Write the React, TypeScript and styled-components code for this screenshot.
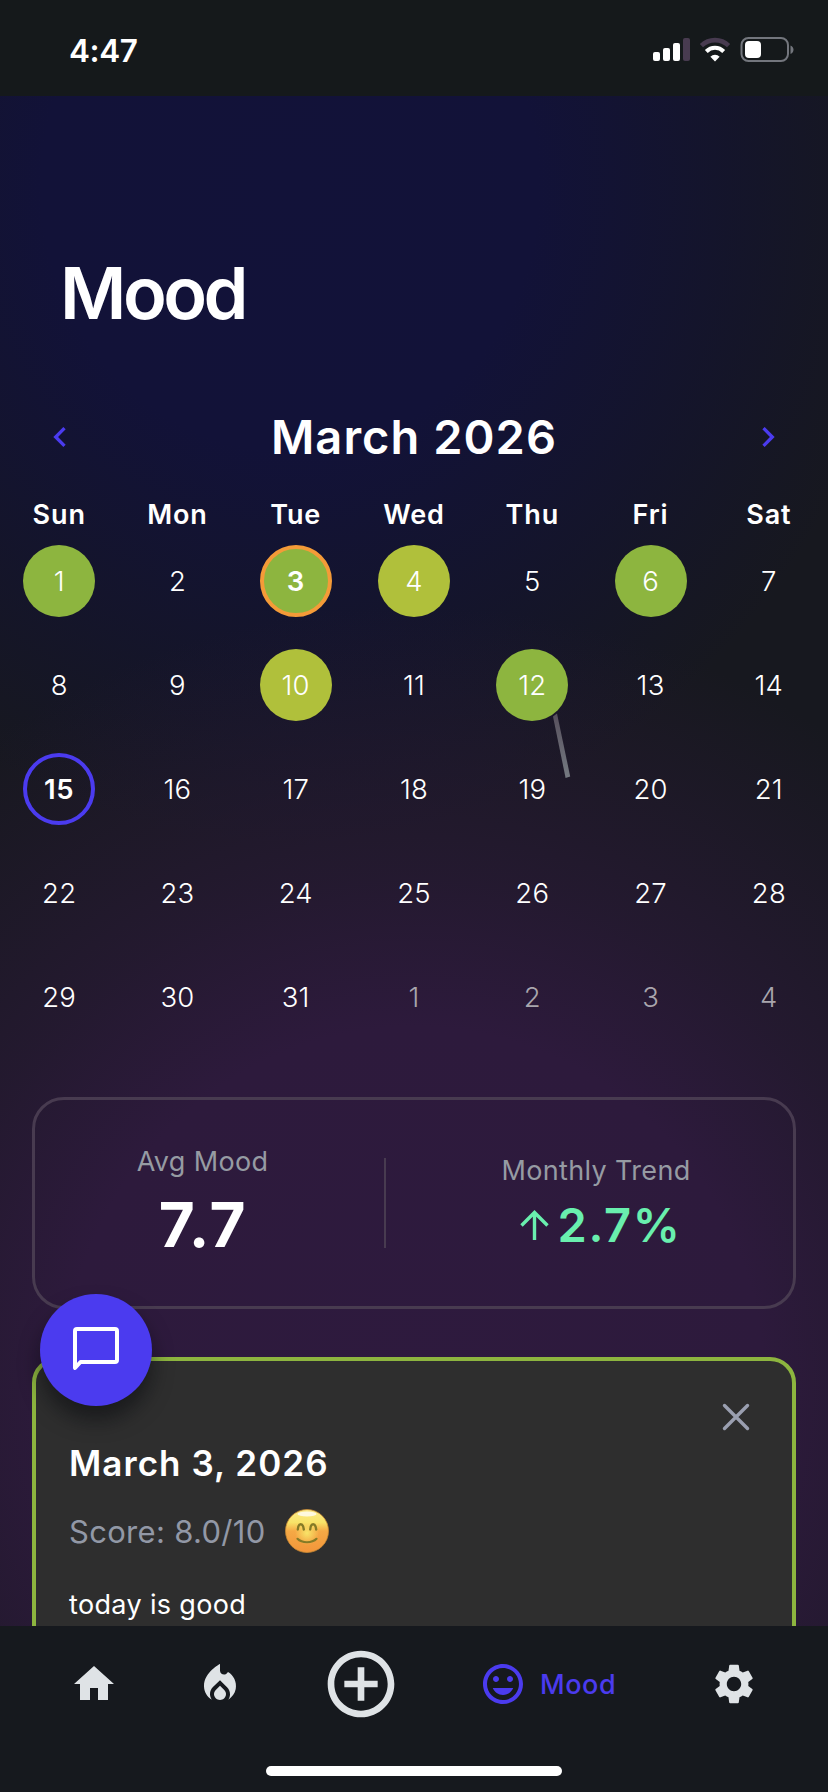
import React from 'react';
import styled, { createGlobalStyle } from 'styled-components';
import { MdHome, MdLocalFireDepartment, MdAddCircleOutline, MdMood, MdSettings, MdChevronLeft, MdChevronRight } from 'react-icons/md';

const Global = createGlobalStyle`
  * { box-sizing: border-box; }
  body { margin: 0; background: #16191e; font-family: Inter, "Liberation Sans", sans-serif; color: #fff; }
`;

const Screen = styled.div`
  width: 828px;
  height: 1792px;
  display: flex;
  flex-direction: column;
  overflow: hidden;
`;

const StatusBar = styled.header`
  height: 96px;
  flex: none;
  background: #15191b;
  display: flex;
  justify-content: space-between;
  align-items: center;
  padding: 5px 34px 0 69px;
`;

const Time = styled.span`
  font-size: 31.5px;
  line-height: 40px;
  font-weight: 600;
  letter-spacing: -0.4px;
`;

const StatusIcons = styled.svg`
  display: block;
  width: 142px;
  height: 28px;
`;

const Content = styled.main`
  position: relative;
  flex: 1;
  min-height: 0;
  overflow: hidden;
  display: flex;
  flex-direction: column;
  background:
    radial-gradient(ellipse 760px 780px at 50% 1290px, #2e1a3e 0%, #2d1a3c 46%, rgba(44, 26, 58, 0.6) 66%, rgba(40, 26, 52, 0) 100%),
    radial-gradient(ellipse 620px 660px at 290px 90px, #121239 0%, #121238 40%, rgba(18, 18, 52, 0.55) 72%, rgba(20, 22, 32, 0) 100%),
    #17181f;
`;

const Title = styled.h1`
  margin: 152px 0 0 60px;
  font-size: 72px;
  line-height: 90px;
  font-weight: 600;
  letter-spacing: -3.5px;
`;

const MonthBar = styled.div`
  display: flex;
  justify-content: space-between;
  align-items: center;
  height: 60px;
  margin-top: 69px;
  padding: 0 40px;
  color: #4b3bef;
`;

const MonthName = styled.h2`
  margin: 0;
  color: #fff;
  font-size: 47px;
  line-height: 60px;
  font-weight: 630;
  letter-spacing: 1.05px;
`;

const Week = styled.div<{ $header?: boolean }>`
  display: grid;
  grid-template-columns: repeat(7, 1fr);
  justify-items: center;
  align-items: center;
  height: ${p => (p.$header ? 34 : 72)}px;
  margin-top: ${p => (p.$header ? 30.5 : 32)}px;
  &:nth-of-type(3) { margin-top: 14px; }
`;

const WeekdayName = styled.span`
  font-size: 27px;
  font-weight: 630;
  letter-spacing: 0.9px;
`;

const Day = styled.span<{ $fill?: string; $ring?: string; $bold?: boolean; $muted?: boolean }>`
  width: 72px;
  height: 72px;
  border-radius: 50%;
  display: flex;
  align-items: center;
  justify-content: center;
  background: ${p => p.$fill ?? 'transparent'};
  border: ${p => (p.$ring ? `4px solid ${p.$ring}` : '0')};
  color: ${p => (p.$muted ? '#a9a6ad' : '#fff')};
  font-size: 27.5px;
  font-weight: ${p => (p.$bold ? 640 : 360)};
  letter-spacing: ${p => (p.$bold ? 0.6 : 0.2)}px;
`;

const Pointer = styled.svg`
  position: absolute;
  left: 548px;
  top: 614px;
  width: 24px;
  height: 70px;
`;

const Stats = styled.section`
  display: flex;
  align-items: center;
  height: 212px;
  flex: none;
  margin: 64.5px 32px 0;
  border: 3px solid #483b50;
  border-radius: 32px;
`;

const Stat = styled.div<{ $width: number }>`
  width: ${p => p.$width}px;
  display: flex;
  flex-direction: column;
  align-items: center;
  gap: 3px;
  padding-top: 5px;
`;

const StatLabel = styled.span`
  font-size: 27px;
  line-height: 36px;
  letter-spacing: 0.35px;
  font-weight: 380;
  color: #969ba3;
`;

const StatValue = styled.strong<{ $size: number }>`
  display: flex;
  align-items: center;
  font-size: ${p => p.$size}px;
  line-height: ${p => (p.$size > 50 ? 84 : 66)}px;
  font-weight: ${p => (p.$size > 50 ? 700 : 600)};
  letter-spacing: 1.6px;
  margin-left: ${p => (p.$size > 50 ? 1 : 9)}px;
  color: ${p => (p.$size > 50 ? '#fff' : '#69efae')};
`;

const Divider = styled.i`
  width: 2px;
  height: 90px;
  margin: 0 13px 0 14px;
  background: #483b50;
`;

const Detail = styled.section`
  position: relative;
  flex: none;
  height: 400px;
  margin: 48px 32px 0;
  padding: 0 34px 0 33px;
  border: 4px solid #8db53f;
  border-radius: 26px;
  background: #2e2e2e;
`;

const CloseRow = styled.div`
  display: flex;
  justify-content: flex-end;
  padding: 42px 8px 0 0;
  height: 78px;
`;

const DetailDate = styled.h3`
  margin: 0;
  font-size: 35px;
  line-height: 48px;
  font-weight: 630;
  letter-spacing: 1.05px;
`;

const Score = styled.div`
  display: flex;
  align-items: center;
  gap: 20px;
  height: 44px;
  margin-top: 22px;
  font-size: 31px;
  font-weight: 380;
  letter-spacing: 0.3px;
  color: #9298a6;
`;

const Note = styled.p`
  margin: 34px 0 0;
  font-size: 27px;
  line-height: 36px;
  letter-spacing: 0.35px;
`;

const ChatButton = styled.button`
  position: absolute;
  left: 40px;
  top: 1198px;
  width: 112px;
  height: 112px;
  padding: 0;
  border: 0;
  border-radius: 50%;
  background: #4b3bef;
  box-shadow: 0 14px 20px rgba(5, 8, 12, 0.5);
  display: flex;
  align-items: center;
  justify-content: center;
`;

const Nav = styled.nav`
  height: 166px;
  flex: none;
  background: #16191e;
  display: flex;
  flex-direction: column;
  align-items: center;
  justify-content: space-between;
  padding-bottom: 16px;
`;

const NavItems = styled.div`
  width: 100%;
  height: 116px;
  display: flex;
  align-items: center;
  justify-content: space-between;
  padding: 0 70px;
  color: #dfe3e6;
`;

const NavItem = styled.a<{ $active?: boolean }>`
  display: flex;
  align-items: center;
  gap: 13px;
  padding-right: ${p => (p.$active ? 16 : 0)}px;
  font-size: 27px;
  font-weight: 500;
  letter-spacing: 0.6px;
  color: ${p => (p.$active ? '#4b3bef' : 'inherit')};
`;

const HomeIndicator = styled.div`
  width: 296px;
  height: 10px;
  border-radius: 5px;
  background: #fff;
`;

const GREEN = '#8db53f';
const LIME = '#b0c03b';
const fills: Record<number, string> = { 1: GREEN, 3: GREEN, 4: LIME, 6: GREEN, 10: LIME, 12: GREEN };
const rings: Record<number, string> = { 3: '#f49b38', 15: '#4b3bef' };
const weekdays = ['Sun', 'Mon', 'Tue', 'Wed', 'Thu', 'Fri', 'Sat'];

const Status = () => (
  <StatusIcons viewBox="0 0 142 28">
    <g fill="#fff">
      <rect x="1" y="15" width="7" height="9" rx="2" />
      <rect x="11" y="11" width="7" height="13" rx="2" />
      <rect x="21" y="6" width="7" height="18" rx="2" />
      <rect x="31" y="1" width="7" height="23" rx="2" fill="#483b50" />
      <path d="M63 24.5l-4.6-4.8a6.6 6.6 0 0 1 9.2 0z" />
    </g>
    <path d="M54.3 14.5a12.2 12.2 0 0 1 17.4 0" fill="none" stroke="#fff" strokeWidth="4" />
    <path d="M49.4 8.6a19.6 19.6 0 0 1 27.2 0" fill="none" stroke="#483b50" strokeWidth="4.6" />
    <rect x="89.5" y="1" width="46.5" height="23" rx="7" fill="none" stroke="#73767d" strokeWidth="2" />
    <rect x="93" y="4" width="16" height="17" rx="4" fill="#fff" />
    <path d="M138.5 8.5c4 1.5 4 7 0 8.500z" fill="#73767d" />
  </StatusIcons>
);

const Emoji = () => (
  <svg width="44" height="44" viewBox="0 0 44 44">
    <defs>
      <linearGradient id="face" x1="0" y1="0" x2="0" y2="1">
        <stop offset="0" stopColor="#fbe98a" />
        <stop offset="0.3" stopColor="#f8e468" />
        <stop offset="0.5" stopColor="#f5a945" />
        <stop offset="1" stopColor="#f2953a" />
      </linearGradient>
      <radialGradient id="glow">
        <stop offset="0" stopColor="#f8e468" />
        <stop offset="1" stopColor="#f8e468" stopOpacity="0" />
      </radialGradient>
    </defs>
    <circle cx="22" cy="22" r="21.5" fill="url(#face)" stroke="#c98a34" strokeWidth="0.8" />
    <circle cx="22" cy="24" r="12" fill="url(#glow)" />
    <ellipse cx="22" cy="5" rx="9.500" ry="2.600" fill="#fff" opacity="0.75" />
    <g fill="none" stroke="#847a26" strokeLinecap="round">
      <path d="M12.800 20.500c.6-7 5.200-7 6 0M25.200 20.500c.6-7 5.200-7 6 0" strokeWidth="2.400" />
      <path d="M12.500 29.800c4.500 4.600 14.500 4.600 19 0" strokeWidth="2.200" />
    </g>
  </svg>
);

export default function App() {
  return (
    <Screen>
      <Global />
      <StatusBar>
        <Time>4:47</Time>
        <Status />
      </StatusBar>
      <Content>
        <Title>Mood</Title>
        <MonthBar>
          <MdChevronLeft size={40} />
          <MonthName>March 2026</MonthName>
          <MdChevronRight size={40} />
        </MonthBar>
        <Week $header>
          {weekdays.map(d => <WeekdayName key={d}>{d}</WeekdayName>)}
        </Week>
        <Pointer viewBox="0 0 24 70">
          <defs>
            <linearGradient id="stick" x1="0" y1="0" x2="0" y2="1">
              <stop offset="0" stopColor="#57505d" />
              <stop offset="1" stopColor="#757a81" />
            </linearGradient>
          </defs>
          <path d="M5 6.500L9 3.500L22.200 66.500L17.600 68Z" fill="url(#stick)" />
        </Pointer>
        {[0, 1, 2, 3, 4].map(w => (
          <Week key={w}>
            {weekdays.map((d, i) => {
              const n = w * 7 + i + 1;
              return (
                <Day key={d} $fill={fills[n]} $ring={rings[n]} $bold={n in rings} $muted={n > 31}>
                  {n > 31 ? n - 31 : n}
                </Day>
              );
            })}
          </Week>
        ))}
        <Stats>
          <Stat $width={335}>
            <StatLabel>Avg Mood</StatLabel>
            <StatValue $size={62}>7.7</StatValue>
          </Stat>
          <Divider />
          <Stat $width={394}>
            <StatLabel>Monthly Trend</StatLabel>
            <StatValue $size={47}>
              <svg width="38" height="34" viewBox="0 0 38 34" fill="none" stroke="#69efae" strokeWidth="3.400">
                <path d="M14.500 32V4.500M1.500 17.500L14.500 4.500L27.500 17.500" />
              </svg>
              2.7%
            </StatValue>
          </Stat>
        </Stats>
        <Detail>
          <CloseRow>
            <svg width="28" height="28" viewBox="0 0 28 28" stroke="#9a9fb0" strokeWidth="3.400" strokeLinecap="round">
              <path d="M2.500 2.500l23 23M25.500 2.500l-23 23" />
            </svg>
          </CloseRow>
          <DetailDate>March 3, 2026</DetailDate>
          <Score>Score: 8.0/10 <Emoji /></Score>
          <Note>today is good</Note>
        </Detail>
        <ChatButton>
          <svg width="46" height="46" viewBox="0 0 46 46" fill="none" stroke="#fff" strokeWidth="4" strokeLinejoin="round">
            <path d="M2 41V4a2 2 0 0 1 2-2h38a2 2 0 0 1 2 2v29a2 2 0 0 1-2 2H7.500z" />
          </svg>
        </ChatButton>
      </Content>
      <Nav>
        <NavItems>
          <NavItem><MdHome size={48} /></NavItem>
          <NavItem><MdLocalFireDepartment size={48} /></NavItem>
          <NavItem><MdAddCircleOutline size={80} /></NavItem>
          <NavItem $active><MdMood size={48} />Mood</NavItem>
          <NavItem><MdSettings size={48} /></NavItem>
        </NavItems>
        <HomeIndicator />
      </Nav>
    </Screen>
  );
}
